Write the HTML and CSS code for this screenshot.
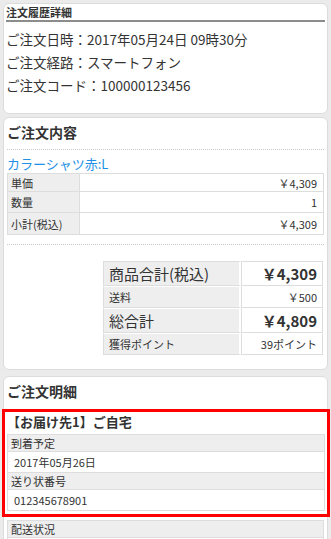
FILE: index.html
```html
<!DOCTYPE html>
<html lang="ja">
<head>
  <meta charset="UTF-8">
  <meta name="viewport" content="width=device-width, initial-scale=1.0">
  <title>注文履歴詳細</title>
  <link rel="stylesheet" href="styles.css">
</head>
<body>

<div class="card card-info">
  <h1 class="page-title">注文履歴詳細</h1>
  <div class="info-lines">
    <p>ご注文日時：2017年05月24日 09時30分</p>
    <p>ご注文経路：スマートフォン</p>
    <p>ご注文コード：100000123456</p>
  </div>
</div>

<div class="card card-order">
  <h2 class="card-title">ご注文内容</h2>
  <div class="item-block">
    <a class="item-link" href="#">カラーシャツ赤:L</a>
    <table class="item-table">
      <tr class="row-a"><th>単価</th><td>￥4,309</td></tr>
      <tr class="row-b"><th>数量</th><td>1</td></tr>
      <tr class="row-c"><th>小計(税込)</th><td>￥4,309</td></tr>
    </table>
  </div>
  <table class="sum-table">
    <tr class="big"><th>商品合計(税込)</th><td>￥4,309</td></tr>
    <tr><th>送料</th><td>￥500</td></tr>
    <tr class="big"><th>総合計</th><td>￥4,809</td></tr>
    <tr><th>獲得ポイント</th><td>39ポイント</td></tr>
  </table>
</div>

<div class="card card-detail">
  <h2 class="card-title">ご注文明細</h2>
  <div class="delivery">
    <h3 class="delivery-title">【お届け先1】ご自宅</h3>
    <table class="detail-table">
      <tr><th>到着予定</th></tr>
      <tr><td>2017年05月26日</td></tr>
      <tr><th>送り状番号</th></tr>
      <tr><td>012345678901</td></tr>
    </table>
  </div>
  <table class="detail-table status-table">
    <tr><th>配送状況</th></tr>
    <tr><td>&nbsp;</td></tr>
  </table>
</div>

</body>
</html>
```

FILE: styles.css
```css
body {
  margin: 0;
  padding: 3px 3px 0;
  background: #ebebeb;
  font-family: "Noto Sans CJK JP", "Noto Sans", sans-serif;
  color: #333;
  overflow: hidden;
}
h1, h2, h3, p {
  margin: 0;
}
.card {
  background: #fff;
  border: 1px solid #dcdcdc;
  border-radius: 6px;
  padding: 4px 3px 14px;
  margin-bottom: 3px;
}
.card-info {
  padding-top: 1px;
}
.card-order {
  margin-bottom: 6px;
}
.page-title {
  font-size: 11px;
  font-weight: bold;
  line-height: 15px;
  border-bottom: 2px solid #8c8c8c;
  margin: 0 -1px;
}
.info-lines {
  padding: 6px 0 2px;
}
.info-lines p {
  font-size: 13.5px;
  line-height: 23px;
  margin-left: -1px;
}
.card-title {
  font-size: 14px;
  font-weight: bold;
  line-height: 20px;
  padding-bottom: 7px;
  border-bottom: 1px dotted #c8c8c8;
}
.item-block {
  padding-top: 5px;
  border-bottom: 1px dotted #c8c8c8;
  padding-bottom: 9px;
}
.item-link {
  display: block;
  font-size: 13px;
  line-height: 18px;
  color: #1e90e6;
  text-decoration: none;
}
table {
  width: 100%;
  border-collapse: collapse;
}
.item-table th,
.item-table td {
  border: 1px solid #ddd;
  font-size: 11px;
  font-weight: normal;
  padding: 0 6px 0 3px;
}
.item-table th {
  width: 62px;
  background: #eee;
  text-align: left;
}
.item-table td {
  text-align: right;
}
.item-table .row-a th, .item-table .row-a td { height: 17px; }
.item-table .row-b th, .item-table .row-b td { height: 20px; }
.item-table .row-c th, .item-table .row-c td { height: 21px; }
.sum-table {
  width: 220px;
  margin: 16px 1px 0 auto;
  border-collapse: separate;
  border-spacing: 0;
}
.sum-table th,
.sum-table td {
  border: 1px solid #ddd;
  border-top: 1px solid #fff;
  font-size: 11px;
  font-weight: normal;
  height: 20px;
  padding: 0 5px;
}
.sum-table tr:first-child th,
.sum-table tr:first-child td {
  border-top: 1px solid #ddd;
}
.sum-table th {
  background: #eee;
  text-align: left;
  border-right: 2px solid #fff;
}
.sum-table td {
  width: 70px;
  text-align: right;
}
.sum-table .big th,
.sum-table .big td {
  font-size: 15px;
  height: 23px;
}
.sum-table .big td {
  font-weight: bold;
}
.card-detail .card-title {
  border-bottom: none;
  padding-bottom: 8px;
}
.delivery {
  border: 3px solid #f00;
  margin: 0 -6px 3px -5px;
  padding: 0 2px 3px;
}
.delivery-title {
  font-size: 13px;
  font-weight: bold;
  line-height: 19px;
  margin-bottom: 3px;
}
.detail-table th,
.detail-table td {
  border: 1px solid #ddd;
  font-size: 11px;
  font-weight: normal;
  text-align: left;
}
.detail-table th {
  background: #eee;
  height: 13px;
  padding: 0 3px;
}
.detail-table td {
  height: 20px;
  padding: 0 6px;
}
```
